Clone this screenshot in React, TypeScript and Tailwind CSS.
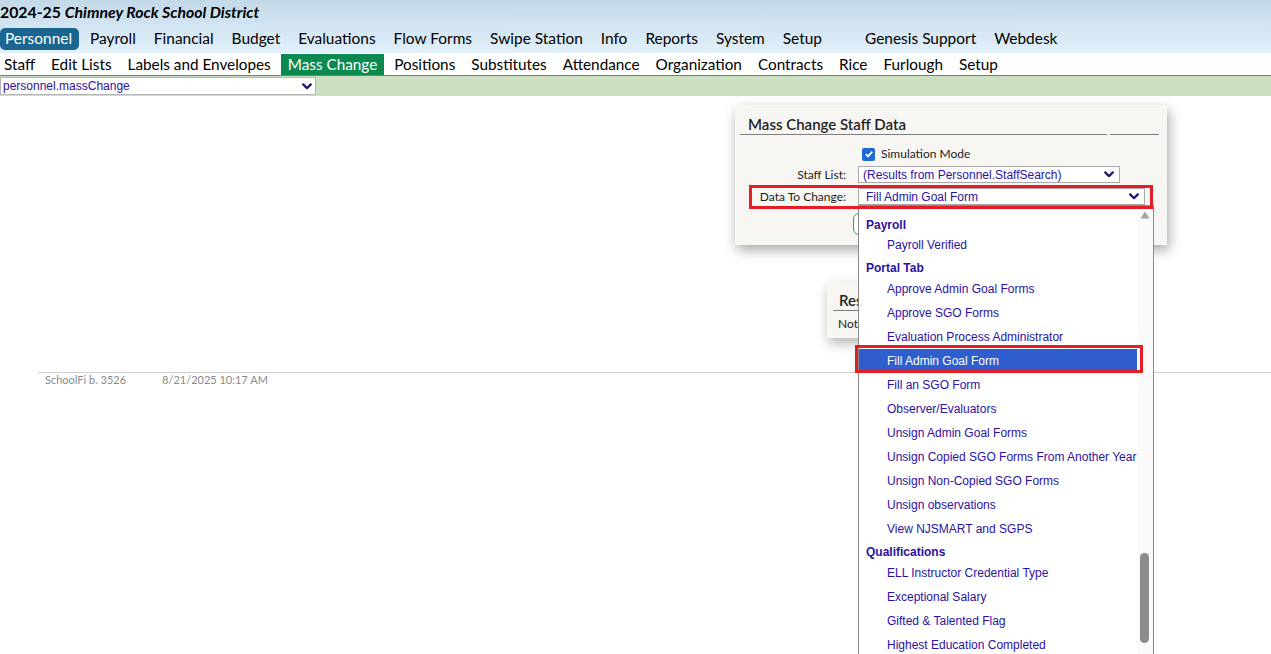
import React from "react";

const Chevron = ({ color = "#1c1470" }: { color?: string }) => (
  <svg width="10" height="7" viewBox="0 0 10 7">
    <path d="M1.2 1.4 L5 5.2 L8.8 1.4" stroke={color} strokeWidth="2.2" fill="none" strokeLinecap="round" strokeLinejoin="round" />
  </svg>
);

const mainMenu = ["Payroll", "Financial", "Budget", "Evaluations", "Flow Forms", "Swipe Station", "Info", "Reports", "System", "Setup"];
const subMenuA = ["Edit Lists", "Labels and Envelopes"];
const subMenuB = ["Positions", "Substitutes", "Attendance", "Organization", "Contracts", "Rice", "Furlough", "Setup"];

type Item = { t: string; h?: boolean; sel?: boolean };
const items: Item[] = [
  { t: "Payroll", h: true },
  { t: "Payroll Verified" },
  { t: "Portal Tab", h: true },
  { t: "Approve Admin Goal Forms" },
  { t: "Approve SGO Forms" },
  { t: "Evaluation Process Administrator" },
  { t: "Fill Admin Goal Form", sel: true },
  { t: "Fill an SGO Form" },
  { t: "Observer/Evaluators" },
  { t: "Unsign Admin Goal Forms" },
  { t: "Unsign Copied SGO Forms From Another Year" },
  { t: "Unsign Non-Copied SGO Forms" },
  { t: "Unsign observations" },
  { t: "View NJSMART and SGPS" },
  { t: "Qualifications", h: true },
  { t: "ELL Instructor Credential Type" },
  { t: "Exceptional Salary" },
  { t: "Gifted & Talented Flag" },
  { t: "Highest Education Completed" },
];

export default function App() {
  return (
    <div className="relative w-[1271px] h-[654px] overflow-hidden bg-white font-['Lato',sans-serif] text-black">
      {/* Header */}
      <div className="bg-gradient-to-b from-[#c3d9e8] to-[#e2f0fa] h-[53px]">
        <div className="h-[28px] pb-[4px] flex items-center text-[15.8px] font-bold leading-none pl-0">
          <span>2024-25&nbsp;</span>
          <span className="italic">Chimney Rock School District</span>
        </div>
        <div className="flex items-center h-[22px] text-[15.45px] leading-none">
          <span className="h-[22px] flex items-center bg-[#1b6690] text-white rounded-[5px] pl-[5px] pr-[7px] mr-[2px]">Personnel</span>
          {mainMenu.map((m, i) => (
            <span key={i} className="px-[9px]">{m}</span>
          ))}
          <span className="px-[9px] ml-[25px]">Genesis Support</span>
          <span className="px-[9px]">Webdesk</span>
        </div>
      </div>
      {/* Sub menu */}
      <div className="h-[23px] flex items-end bg-white border-b border-[#7a7a7a] text-[15.3px] leading-none">
        <span className="h-[21px] flex items-center pl-[4px] pr-[8px]">Staff</span>
        {subMenuA.map((m, i) => (
          <span key={i} className="h-[21px] flex items-center px-[8px]">{m}</span>
        ))}
        <span className="h-[21px] flex items-center bg-[#0b8a50] text-white px-[7px] ml-[2px] mr-[2px]">Mass Change</span>
        {subMenuB.map((m, i) => (
          <span key={i} className="h-[21px] flex items-center px-[8px]">{m}</span>
        ))}
      </div>
      {/* Green bar */}
      <div className="h-[20px] bg-[#cce0c1] flex items-center">
        <div className="w-[316px] h-[18px] bg-white border border-[#b5b5b5] flex items-center justify-between pl-[2px] pr-[3px] font-['Liberation_Sans',Arial,sans-serif] text-[12px] text-[#2b12a0]">
          <span>personnel.massChange</span>
          <Chevron />
        </div>
      </div>

      {/* Main */}
      <div className="pt-[9px] pl-[735px]">
        <div className="relative w-[432px] h-[140px] bg-[#f7f6f2] shadow-[2px_5px_12px_rgba(0,0,0,0.35)]">
          <div className="pt-[5px] flex">
            <div className="ml-[5px] w-[367px] h-[25px] border-b border-[#7d7d7d] pl-[8px] flex items-center text-[15px] font-semibold text-[#222] leading-none pt-[4px]">
              Mass Change Staff Data
            </div>
            <div className="ml-[3px] w-[49px] h-[25px] border-b border-[#7d7d7d]" />
          </div>
          <div className="mt-[12px] flex items-center h-[14px]">
            <div className="w-[127px]" />
            <div className="w-[13px] h-[13px] rounded-[2px] bg-[#1a6bd6] flex items-center justify-center">
              <svg width="10" height="10" viewBox="0 0 10 10">
                <path d="M1.8 5.2 L4 7.4 L8.3 2.6" stroke="white" strokeWidth="1.8" fill="none" />
              </svg>
            </div>
            <span className="ml-[6px] text-[12px] text-[#222]">Simulation Mode</span>
          </div>
          <div className="mt-[5px] flex items-center h-[17px]">
            <div className="w-[111px] text-right text-[12px] text-[#222]">Staff List:</div>
            <div className="ml-[12px] w-[262px] h-[17px] bg-white border border-[#a9a9a9] flex items-center justify-between pl-[4px] pr-[5px] font-['Liberation_Sans',Arial,sans-serif] text-[12px] text-[#2b12a0]">
              <span>(Results from Personnel.StaffSearch)</span>
              <Chevron />
            </div>
          </div>
          <div className="mt-[5px] flex items-center h-[17px]">
            <div className="w-[111px] text-right text-[12px] text-[#222]">Data To Change:</div>
            <div className="relative ml-[12px] w-[287px] h-[17px] bg-white border border-[#a9a9a9] flex items-center justify-between pl-[7px] pr-[5px] font-['Liberation_Sans',Arial,sans-serif] text-[12px] text-[#2b12a0]">
              <span>Fill Admin Goal Form</span>
              <Chevron />
              {/* Dropdown list */}
              <div className="absolute z-10 left-[-1px] top-[16px] w-[296px] h-[460px] bg-white border border-[#8a8a8a] flex">
                <div className="w-[278px] pt-[7px] font-['Liberation_Sans',Arial,sans-serif] text-[12px] text-[#2b12a0]">
                  {items.map((it, i) =>
                    it.h ? (
                      <div key={i} className={`${i === 0 ? "h-[20px] pt-[3px]" : "h-[20px] pt-[1px]"} flex items-center pl-[7px] font-bold`}>{it.t}</div>
                    ) : (
                      <div key={i} className={`h-[24px] flex items-center pl-[28px] ${it.sel ? "bg-[#2f5fce] text-white" : ""}`}>{it.t}</div>
                    )
                  )}
                </div>
                <div className="relative w-[16px] bg-[#fafafa]">
                  <svg className="absolute left-[3px] top-[5px]" width="10" height="8" viewBox="0 0 10 8">
                    <path d="M5 0.5 L9.5 7.5 L0.5 7.5 Z" fill="#a3a3a3" />
                  </svg>
                  <div className="absolute left-[3px] top-[347px] w-[9px] h-[90px] rounded-full bg-[#8b8b8b]" />
                </div>
                {/* red highlight annotation */}
                <div className="absolute left-[-4px] top-[139px] w-[288px] h-[28px] border-[3px] border-[#e51e25] z-20" />
              </div>
            </div>
          </div>
          <div className="mt-[8px] ml-[118px] w-[60px] h-[22px] rounded-[6px] border border-[#3aa05c] bg-white" />
          {/* red annotation */}
          <div className="absolute left-[14px] top-[80px] w-[404px] h-[24px] border-[3px] border-[#e51e25] z-20 pointer-events-none" />
        </div>

        <div className="mt-[37px] ml-[92px] w-[248px] h-[56px] bg-[#f7f6f2] shadow-[2px_5px_12px_rgba(0,0,0,0.3)]">
          <div className="pt-[5px] mx-[6px] h-[29px] border-b border-[#7d7d7d] pl-[6px] flex items-center text-[15px] font-semibold text-[#222] pt-[8px]">
            Results
          </div>
          <div className="pl-[11px] pt-[4px] text-[12px] text-[#222]">Not Processed</div>
        </div>
      </div>

      {/* Footer */}
      <div className="mt-[34px] ml-[38px] border-t border-[#cfcfcf] flex text-[11px] text-[#8a8a8a] h-[16px] items-center">
        <span className="ml-[7px]">SchoolFi b. 3526</span>
        <span className="ml-[36px]">8/21/2025 10:17 AM</span>
      </div>
    </div>
  );
}
